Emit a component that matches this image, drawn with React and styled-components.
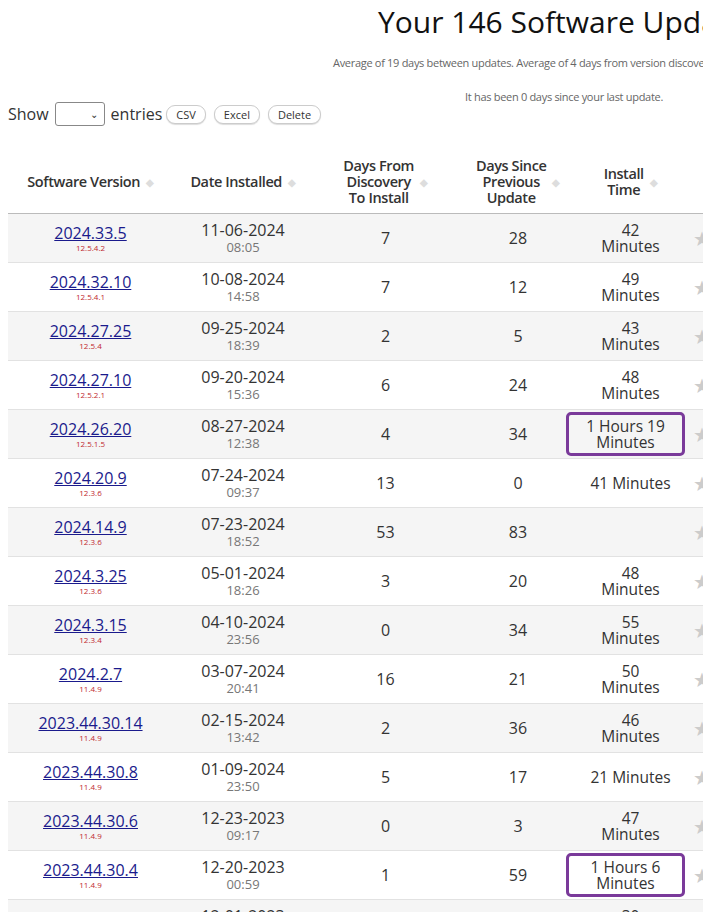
import React from "react";
import styled, { createGlobalStyle } from "styled-components";

const G = createGlobalStyle`
  html,body{margin:0;padding:0;overflow:hidden;background:#fff;}
  body{font-family:"Open Sans",Arial,sans-serif;color:#222;}
`;
const Page = styled.div`width:1000px;padding-left:8px;`;
const Title = styled.h1`margin:0;padding:3px 0 0 370px;font-size:30px;font-weight:400;line-height:38px;color:#111;`;
const Note = styled.div`padding-left:${p => p.$l}px;font-size:11px;color:#666;margin-top:${p => p.$t}px;letter-spacing:-0.3px;`;
const Bar = styled.div`display:flex;align-items:center;gap:4px;font-size:16px;margin-top:-2px;color:#333;`;
const Sel = styled.div`width:50px;height:24px;border:1px solid #888;border-radius:3px;box-sizing:border-box;display:flex;align-items:center;justify-content:flex-end;padding-right:6px;font-size:10px;margin:0 2px;`;
const Btn = styled.span`font-size:11px;border:1px solid #ccc;border-radius:9px;padding:1px 9px;margin-right:4px;background:#fff;box-shadow:0 1px 1px #ddd;`;
const Table = styled.div`margin-top:24px;width:760px;`;
const Row = styled.div`display:grid;grid-template-columns:165px 140px 145px 120px 105px 50px;align-items:center;height:${p => p.$h || 49}px;background:${p => p.$s ? "#f5f5f5" : "#fff"};border-bottom:1px solid ${p => p.$head ? "#bbb" : "#e2e2e2"};box-sizing:border-box;`;
const Th = styled.div`font-size:14.5px;font-weight:600;text-align:center;line-height:16px;color:#333;display:flex;align-items:center;justify-content:center;gap:6px;letter-spacing:-0.4px;`;
const Sort = styled.span`color:#ddd;font-size:10px;`;
const Cell = styled.div`text-align:center;font-size:16px;line-height:17px;color:#333;`;
const Ver = styled.a`color:#1a1a8c;text-decoration:underline;font-size:16px;font-weight:500;display:block;line-height:17px;`;
const Sub = styled.div`color:#c0282e;font-size:8px;line-height:9px;margin-top:1px;`;
const Time = styled.div`color:#777;font-size:13px;line-height:16px;`;
const Inst = styled.div`text-align:center;font-size:15.5px;line-height:16px;color:#333;${p => p.$box && "border:3px solid #7a3a9a;border-radius:5px;padding:3px 0;margin:0 -2px 0 -12px;"}`;
const Star = styled.div`color:#ccc;font-size:20px;padding-left:10px;`;

const data = [
["2024.33.5","12.5.4.2","11-06-2024","08:05",7,28,"42|Minutes"],
["2024.32.10","12.5.4.1","10-08-2024","14:58",7,12,"49|Minutes"],
["2024.27.25","12.5.4","09-25-2024","18:39",2,5,"43|Minutes"],
["2024.27.10","12.5.2.1","09-20-2024","15:36",6,24,"48|Minutes"],
["2024.26.20","12.5.1.5","08-27-2024","12:38",4,34,"1 Hours 19|Minutes",1],
["2024.20.9","12.3.6","07-24-2024","09:37",13,0,"41 Minutes"],
["2024.14.9","12.3.6","07-23-2024","18:52",53,83,""],
["2024.3.25","12.3.6","05-01-2024","18:26",3,20,"48|Minutes"],
["2024.3.15","12.3.4","04-10-2024","23:56",0,34,"55|Minutes"],
["2024.2.7","11.4.9","03-07-2024","20:41",16,21,"50|Minutes"],
["2023.44.30.14","11.4.9","02-15-2024","13:42",2,36,"46|Minutes"],
["2023.44.30.8","11.4.9","01-09-2024","23:50",5,17,"21 Minutes"],
["2023.44.30.6","11.4.9","12-23-2023","09:17",0,3,"47|Minutes"],
["2023.44.30.4","11.4.9","12-20-2023","00:59",1,59,"1 Hours 6|Minutes",1],
["2023.27.7","11.4.9","12-01-2023","10:11",2,19,"30|Minutes"],
];

export default function App(){
  return <Page><G/>
    <Title>Your 146 Software Updates</Title>
    <Note $l={325} $t={14}>Average of 19 days between updates. Average of 4 days from version discovery to install.</Note>
    <Note $l={457} $t={19}>It has been 0 days since your last update.</Note>
    <Bar>Show<Sel>⌄</Sel>entries<Btn>CSV</Btn><Btn>Excel</Btn><Btn>Delete</Btn></Bar>
    <Table>
      <Row $h={64} $head>
        <Th>Software Version<Sort>◆</Sort></Th>
        <Th>Date Installed<Sort>◆</Sort></Th>
        <Th>Days From<br/>Discovery<br/>To Install<Sort>◆</Sort></Th>
        <Th>Days Since<br/>Previous<br/>Update<Sort>◆</Sort></Th>
        <Th>Install<br/>Time<Sort>◆</Sort></Th>
        <Th/>
      </Row>
      {data.map((d,i)=><Row key={i} $s={i%2===0}>
        <Cell><Ver href="#">{d[0]}</Ver><Sub>{d[1]}</Sub></Cell>
        <Cell>{d[2]}<Time>{d[3]}</Time></Cell>
        <Cell>{d[4]}</Cell>
        <Cell>{d[5]}</Cell>
        <Inst $box={d[7]}>{d[6].split("|").map((t,j)=><div key={j}>{t}</div>)}</Inst>
        <Star>★</Star>
      </Row>)}
    </Table>
  </Page>;
}
